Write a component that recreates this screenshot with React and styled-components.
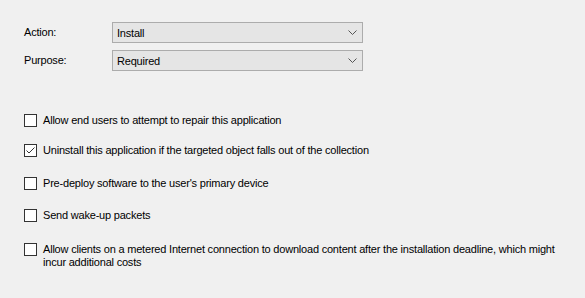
import React, { useState } from "react";
import styled, { createGlobalStyle } from "styled-components";

const GlobalStyle = createGlobalStyle`
  html, body {
    margin: 0;
    padding: 0;
    background: #f0f0f0;
  }
  body {
    font-family: "Liberation Sans", Arial, sans-serif;
    font-size: 11px;
    letter-spacing: -0.2px;
    color: #000;
  }
`;

const StyledPage = styled.div`
  width: 585px;
  height: 298px;
  box-sizing: border-box;
  padding: 22px 0 0 24px;
  display: flex;
  flex-direction: column;
`;

const StyledFieldGrid = styled.div`
  display: grid;
  grid-template-columns: 88px 251px;
  row-gap: 7px;
  align-items: center;
`;

const StyledLabel = styled.label`
  line-height: 21px;
`;

const StyledCombo = styled.div`
  height: 21px;
  box-sizing: border-box;
  border: 1px solid #acacac;
  background: #e5e5e5;
  display: flex;
  align-items: center;
  justify-content: space-between;
  padding: 0 5px 0 4px;
`;

const StyledOptions = styled.div`
  display: flex;
  flex-direction: column;
  margin-top: 43px;
`;

const StyledOption = styled.label`
  display: flex;
  align-items: flex-start;
  gap: 6px;
  margin-top: ${(p) => p.$space || 0}px;
  width: 540px;
  line-height: 13px;
`;

const StyledBox = styled.span`
  flex: none;
  width: 13px;
  height: 13px;
  box-sizing: border-box;
  border: 1px solid #333;
  background: #fff;
  display: flex;
  align-items: center;
  justify-content: center;
`;

const StyledText = styled.span`
  margin-top: 0;
`;

const Chevron = () => (
  <svg width="9" height="5" viewBox="0 0 9 5">
    <path d="M0.5 0.5 L4.5 4.5 L8.5 0.5" fill="none" stroke="#555" strokeWidth="1" />
  </svg>
);

const Check = () => (
  <svg width="11" height="11" viewBox="0 0 11 11">
    <path d="M1.5 5.5 L4 8 L9.5 2.5" fill="none" stroke="#333" strokeWidth="1" />
  </svg>
);

const options = [
  { text: "Allow end users to attempt to repair this application", space: 0 },
  { text: "Uninstall this application if the targeted object falls out of the collection", space: 17, checked: true },
  { text: "Pre-deploy software to the user's primary device", space: 20 },
  { text: "Send wake-up packets", space: 19 },
  {
    text: "Allow clients on a metered Internet connection to download content after the installation deadline, which might incur additional costs",
    space: 21,
  },
];

const App = () => {
  const [checks, setChecks] = useState(options.map((o) => !!o.checked));

  return (
    <StyledPage>
      <GlobalStyle />
      <StyledFieldGrid>
        <StyledLabel>Action:</StyledLabel>
        <StyledCombo>
          <span>Install</span>
          <Chevron />
        </StyledCombo>
        <StyledLabel>Purpose:</StyledLabel>
        <StyledCombo>
          <span>Required</span>
          <Chevron />
        </StyledCombo>
      </StyledFieldGrid>
      <StyledOptions>
        {options.map((opt, i) => (
          <StyledOption
            key={i}
            $space={opt.space}
            onClick={() => setChecks(checks.map((c, j) => (j === i ? !c : c)))}
          >
            <StyledBox>{checks[i] && <Check />}</StyledBox>
            <StyledText>{opt.text}</StyledText>
          </StyledOption>
        ))}
      </StyledOptions>
    </StyledPage>
  );
};

export default App;
